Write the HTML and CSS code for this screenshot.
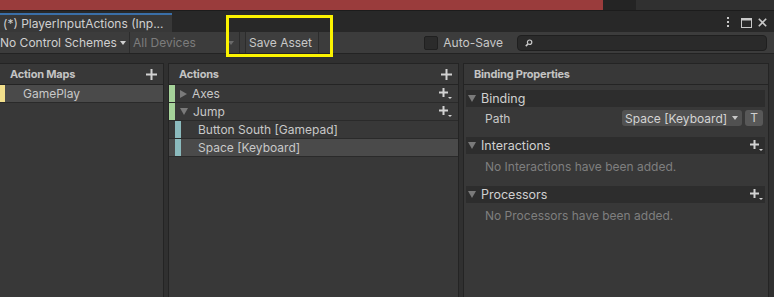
FILE: index.html
```html
<!DOCTYPE html>
<html lang="en">
<head>
    <meta charset="UTF-8">
    <title>PlayerInputActions</title>
    <link rel="stylesheet" href="styles.css">
</head>
<body>
    <!-- strip of the editor above the window -->
    <div class="topstrip">
        <div class="strip-red"></div>
        <div class="strip-dark"></div>
        <div class="strip-grey"></div>
    </div>

    <div class="tabbar">
        <div class="tab">(*) PlayerInputActions (Inp...</div>
        <div class="winbtns">
            <svg class="ico-kebab" width="4" height="12" viewBox="0 0 4 12"><rect x="1" y="0" width="2" height="2"/><rect x="1" y="4" width="2" height="2"/><rect x="1" y="8" width="2" height="2"/></svg>
            <svg class="ico-max" width="11" height="10" viewBox="0 0 11 10"><rect x="0.5" y="0.5" width="10" height="9" fill="none" stroke="#c8c8c8"/><rect x="0" y="0" width="11" height="2.5" fill="#c8c8c8"/></svg>
            <svg class="ico-close" width="9" height="9" viewBox="0 0 9 9"><path d="M0.8 0.8 L8.2 8.2 M8.2 0.8 L0.8 8.2" stroke="#c8c8c8" stroke-width="1.6"/></svg>
        </div>
    </div>

    <div class="toolbar">
        <div class="tb-drop schemes">No Control Schemes <span class="arrow"></span></div>
        <div class="tb-drop devices">All Devices <span class="arrow dim"></span></div>
        <div class="tb-btn">Save Asset</div>
        <div class="tb-right">
            <label class="autosave"><span class="checkbox"></span>Auto-Save</label>
            <div class="search">
                <svg width="8" height="8" viewBox="0 0 8 8"><circle cx="4.6" cy="3.2" r="2.2" fill="none" stroke="#c8c8c8" stroke-width="1.2"/><path d="M3 4.9 L0.8 7.1" stroke="#c8c8c8" stroke-width="1.5"/></svg>
            </div>
        </div>
    </div>

    <div class="editor">
        <div class="panel maps">
            <div class="panel-head">Action Maps
                <svg class="plus" width="11" height="11" viewBox="0 0 11 11"><path d="M5.5 0v11M0 5.5h11" stroke="#d2d2d2" stroke-width="2"/></svg>
            </div>
            <div class="row selected"><span class="mark yellow"></span><span class="label">GamePlay</span></div>
        </div>

        <div class="panel actions">
            <div class="panel-head">Actions
                <svg class="plus" width="11" height="11" viewBox="0 0 11 11"><path d="M5.5 0v11M0 5.5h11" stroke="#d2d2d2" stroke-width="2"/></svg>
            </div>
            <div class="row">
                <span class="mark green"></span><span class="tri right"></span><span class="label">Axes</span>
                <svg class="plusdrop" width="13" height="12" viewBox="0 0 13 12"><path d="M4.5 0v9M0 4.5h9" stroke="#d2d2d2" stroke-width="2"/><path d="M9 9h4l-2 2z" fill="#d2d2d2"/></svg>
            </div>
            <div class="row">
                <span class="mark green"></span><span class="tri down"></span><span class="label">Jump</span>
                <svg class="plusdrop" width="13" height="12" viewBox="0 0 13 12"><path d="M4.5 0v9M0 4.5h9" stroke="#d2d2d2" stroke-width="2"/><path d="M9 9h4l-2 2z" fill="#d2d2d2"/></svg>
            </div>
            <div class="row binding"><span class="mark blue"></span><span class="label">Button South [Gamepad]</span></div>
            <div class="row binding selected"><span class="mark blue"></span><span class="label">Space [Keyboard]</span></div>
        </div>

        <div class="panel props">
            <div class="panel-head">Binding Properties</div>
            <div class="props-body">
                <div class="foldout"><span class="tri down"></span>Binding</div>
                <div class="path-row">
                    <span class="path-label">Path</span>
                    <div class="path-drop">Space [Keyboard] <span class="arrow"></span></div>
                    <div class="t-btn">T</div>
                </div>
                <div class="foldout"><span class="tri down"></span>Interactions
                    <svg class="plusdrop" width="13" height="12" viewBox="0 0 13 12"><path d="M4.5 0v9M0 4.5h9" stroke="#d2d2d2" stroke-width="2"/><path d="M9 9h4l-2 2z" fill="#d2d2d2"/></svg>
                </div>
                <div class="empty">No Interactions have been added.</div>
                <div class="foldout"><span class="tri down"></span>Processors
                    <svg class="plusdrop" width="13" height="12" viewBox="0 0 13 12"><path d="M4.5 0v9M0 4.5h9" stroke="#d2d2d2" stroke-width="2"/><path d="M9 9h4l-2 2z" fill="#d2d2d2"/></svg>
                </div>
                <div class="empty">No Processors have been added.</div>
            </div>
        </div>
    </div>

    <!-- yellow annotation box drawn over the toolbar -->
    <div class="highlight"></div>
</body>
</html>
```

FILE: styles.css
```css
body {
    margin: 0;
    width: 774px;
    height: 297px;
    overflow: hidden;
    position: relative;
    background: #303030;
    font-family: Inter, "Noto Sans", sans-serif;
    font-size: 12px;
    color: #c8c8c8;
}
.topstrip {
    display: flex;
    height: 10px;
    border-bottom: 1px solid #1c1c1c;
}
.strip-red {
    width: 603px;
    background: #9a3c3c;
}
.strip-dark {
    width: 33px;
    background: #242424;
}
.strip-grey {
    flex: 1;
    background: #303030;
}
.tabbar {
    display: flex;
    align-items: flex-end;
    height: 21px;
    background: #282828;
}
.tab {
    width: 169px;
    height: 17px;
    line-height: 17px;
    padding-left: 3px;
    border-top: 2px solid #3a6fa8;
    background: #383838;
    white-space: nowrap;
    color: #d0d0d0;
}
.winbtns {
    margin-left: auto;
    align-self: stretch;
    display: flex;
    align-items: center;
    padding: 2px 7px 0 0;
}
.ico-kebab {
    fill: #c8c8c8;
    margin-right: 11px;
}
.ico-max {
    margin-right: 6px;
}
.toolbar {
    display: flex;
    height: 21px;
    background: #3c3c3c;
    border-bottom: 1px solid #232323;
}
.tb-drop {
    display: flex;
    align-items: center;
    border-right: 1px solid #2c2c2c;
    white-space: nowrap;
}
.schemes {
    width: 129px;
    padding-left: 0;
    color: #d0d0d0;
}
.devices {
    width: 106px;
    padding-left: 3px;
    color: #7c7c7c;
    justify-content: space-between;
}
.arrow {
    display: inline-block;
    width: 0;
    height: 0;
    border-left: 3.5px solid transparent;
    border-right: 3.5px solid transparent;
    border-top: 4px solid #d0d0d0;
    margin-left: 3px;
}
.arrow.dim {
    border-top-color: #6a6a6a;
    margin-right: 5px;
}
.tb-btn {
    display: flex;
    align-items: center;
    margin-left: 5px;
    padding: 0 5px 0 3px;
    width: 64px;
    border-left: 1px solid #2c2c2c;
    border-right: 1px solid #2c2c2c;
    background: #3e3e3e;
    color: #c8c8c8;
}
.tb-right {
    margin-left: auto;
    display: flex;
    align-items: center;
    padding-right: 7px;
}
.autosave {
    display: flex;
    align-items: center;
    margin-right: 14px;
    color: #c8c8c8;
}
.checkbox {
    width: 12px;
    height: 12px;
    margin-right: 5px;
    border: 1px solid #202020;
    border-radius: 2px;
    background: #2b2b2b;
}
.search {
    width: 241px;
    height: 14px;
    display: flex;
    align-items: center;
    padding-left: 7px;
    box-sizing: content-box;
    border: 1px solid #1f1f1f;
    border-radius: 4px;
    background: #2a2a2a;
}
.editor {
    display: flex;
    gap: 4px;
    height: 234px;
    padding: 9px 5px 0 0;
}
.panel {
    background: #383838;
    border: 1px solid #242424;
    border-bottom: none;
}
.maps {
    width: 163px;
    border-left: none;
}
.actions {
    width: 289px;
}
.props {
    width: 304px;
}
.panel-head {
    display: flex;
    align-items: center;
    height: 20px;
    padding: 0 6px 0 10px;
    border-bottom: 1px solid #242424;
    font-size: 11px;
    font-weight: 700;
    letter-spacing: -0.2px;
    color: #c4c4c4;
}
.panel-head .plus {
    margin-left: auto;
}
.row {
    display: flex;
    align-items: center;
    height: 17px;
    border-bottom: 1px solid #2a2a2a;
    padding-right: 6px;
}
.row.selected {
    background: #4a4a4a;
}
.mark {
    align-self: stretch;
    width: 6px;
}
.yellow {
    width: 5px;
    background: #f2df8c;
}
.green {
    background: #a6d39a;
}
.blue {
    margin-left: 6px;
    background: #8bbabd;
}
.maps .label {
    margin-left: 18px;
}
.row.binding .label {
    margin-left: 17px;
}
.row .plusdrop {
    margin-left: auto;
}
.tri {
    display: inline-block;
    width: 0;
    height: 0;
}
.tri.right {
    margin: 0 5px 0 5px;
    border-top: 4.5px solid transparent;
    border-bottom: 4.5px solid transparent;
    border-left: 7px solid #7a7a7a;
}
.tri.down {
    margin: 0 5px 0 5px;
    border-left: 4px solid transparent;
    border-right: 4px solid transparent;
    border-top: 7px solid #7a7a7a;
}
.props-body {
    padding: 5px 3px 0 2px;
}
.foldout {
    display: flex;
    align-items: center;
    height: 17px;
    padding-right: 2px;
    background: #2d2d2d;
    font-size: 12.5px;
    color: #d0d0d0;
}
.foldout .tri.down {
    margin: 0 5px 0 2px;
}
.foldout .plusdrop {
    margin-left: auto;
}
.path-row {
    display: flex;
    align-items: center;
    height: 20px;
    padding: 1px 2px 9px 19px;
}
.path-label {
    flex: 1;
}
.path-drop {
    display: flex;
    align-items: center;
    justify-content: space-between;
    width: 113px;
    height: 16px;
    padding: 0 4px 0 3px;
    border-radius: 3px;
    background: #515151;
    color: #d4d4d4;
    white-space: nowrap;
}
.path-drop .arrow {
    border-top-color: #c8c8c8;
}
.t-btn {
    width: 18px;
    height: 16px;
    margin-left: 3px;
    line-height: 16px;
    text-align: center;
    border-radius: 3px;
    background: #585858;
    color: #d0d0d0;
}
.empty {
    height: 18px;
    line-height: 18px;
    padding: 4px 0 10px 19px;
    color: #7f7f7f;
}
.highlight {
    position: absolute;
    left: 226px;
    top: 15px;
    width: 107px;
    height: 42px;
    box-sizing: border-box;
    border: 3px solid #fbf300;
}
```
